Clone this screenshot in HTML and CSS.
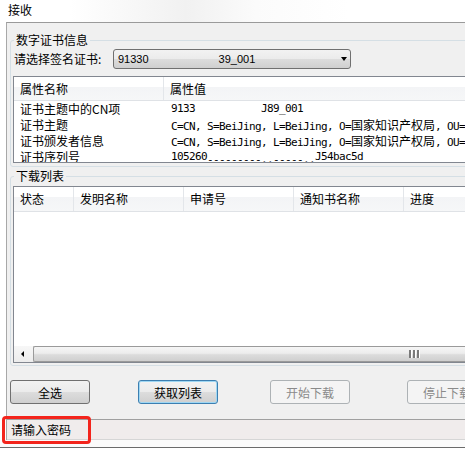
FILE: index.html
```html
<!DOCTYPE html>
<html lang="zh-CN">

<head>
    <meta charset="UTF-8">
    <meta name="viewport" content="width=device-width, initial-scale=1.0">
    <title>接收</title>
    <link rel="stylesheet" href="styles.css">
</head>

<body>
    <!-- 标题栏 -->
    <div class="titlebar">接收</div>

    <div class="window">
        <!-- 数字证书信息 -->
        <fieldset class="group group-cert">
            <legend>数字证书信息</legend>
            <div class="cert-row">
                <label class="cert-label">请选择签名证书:</label>
                <div class="combo">
                    <span class="combo-text">91330</span>
                    <span class="combo-text combo-tail">39_001</span>
                    <span class="combo-arrow"></span>
                </div>
            </div>

            <div class="listview props">
                <div class="lv-header">
                    <div class="hcol p-name">属性名称</div>
                    <div class="hcol p-value">属性值</div>
                </div>
                <div class="lv-row">
                    <div class="cell p-name">证书主题中的CN项</div>
                    <div class="cell p-value mono">9133           J89_001</div>
                </div>
                <div class="lv-row">
                    <div class="cell p-name">证书主题</div>
                    <div class="cell p-value mono">C=CN, S=BeiJing, L=BeiJing, O=<span class="cjk">国家知识产权局</span>, OU=<span class="cjk">国</span></div>
                </div>
                <div class="lv-row">
                    <div class="cell p-name">证书颁发者信息</div>
                    <div class="cell p-value mono">C=CN, S=BeiJing, L=BeiJing, O=<span class="cjk">国家知识产权局</span>, OU=<span class="cjk">国</span></div>
                </div>
                <div class="lv-row">
                    <div class="cell p-name">证书序列号</div>
                    <div class="cell p-value mono">105260<span class="masked">---------..-----..</span>J54bac5d</div>
                </div>
            </div>
        </fieldset>

        <!-- 下载列表 -->
        <fieldset class="group group-dl">
            <legend>下载列表</legend>
            <div class="listview downloads">
                <div class="lv-header">
                    <div class="hcol d-state">状态</div>
                    <div class="hcol d-name">发明名称</div>
                    <div class="hcol d-no">申请号</div>
                    <div class="hcol d-notice">通知书名称</div>
                    <div class="hcol d-progress">进度</div>
                </div>
                <div class="lv-body"></div>
                <div class="hscroll">
                    <div class="hs-arrow"><span class="hs-tri"></span></div>
                    <div class="hs-thumb">
                        <span class="grip"></span>
                        <span class="grip"></span>
                        <span class="grip"></span>
                    </div>
                </div>
            </div>
        </fieldset>

        <div class="buttons">
            <button class="btn btn-all">全选</button>
            <button class="btn btn-fetch focused">获取列表</button>
            <button class="btn btn-start" disabled>开始下载</button>
            <button class="btn btn-stop" disabled>停止下载</button>
        </div>

        <div class="statusbar">请输入密码</div>
    </div>
    <div class="frame-bottom"></div>

    <!-- 标注框 -->
    <div class="highlight"></div>
</body>

</html>
```

FILE: styles.css
```css
* {
    margin: 0;
    padding: 0;
    box-sizing: border-box;
}

body {
    position: relative;
    width: 465px;
    height: 454px;
    overflow: hidden;
    background-color: #fff;
    font-family: "Noto Sans CJK SC", "Microsoft YaHei", sans-serif;
    font-size: 12px;
    color: #000;
}

.titlebar {
    height: 22px;
    padding: 3px 0 0 8px;
    line-height: 14px;
    background: linear-gradient(90deg, #fff 15%, #f1f1f1 40%, #fbfbfb 55%, #fff 75%);
}

.window {
    width: 560px;
    margin-left: 6px;
    border-top: 1px solid #9a9a9a;
    border-left: 1px solid #a8a8a8;
    background-color: #f0f0f0;
}

/* 分组框 */
.group {
    margin-left: 3px;
    border: 1px solid #d5dfe5;
    border-radius: 3px;
    padding: 2px 0 0 2px;
}

.group legend {
    margin-left: 1px;
    padding: 0 2px;
    line-height: 14px;
    height: 14px;
}

.group-cert {
    margin-top: 10px;
    padding-bottom: 3px;
}

.group-dl {
    margin-top: 2px;
    padding-top: 3px;
    padding-bottom: 2px;
}

.cert-row {
    display: flex;
    align-items: center;
    height: 20px;
    padding-left: 1px;
}

.cert-label {
    width: 99px;
    line-height: 14px;
}

.combo {
    display: flex;
    align-items: center;
    width: 238px;
    height: 20px;
    padding-left: 4px;
    border: 1px solid #707070;
    border-radius: 3px;
    background: linear-gradient(#f2f2f2, #ebebeb 50%, #dddddd 50%, #cfcfcf);
}

.combo-text {
    font-family: "Liberation Sans", Arial, sans-serif;
    font-size: 11px;
    line-height: 14px;
}

.combo-tail {
    margin-left: 70px;
}

.combo-arrow {
    margin-left: auto;
    margin-right: 3px;
    width: 0;
    height: 0;
    border-left: 3.5px solid transparent;
    border-right: 3.5px solid transparent;
    border-top: 4px solid #000;
}

/* 列表视图 */
.listview {
    border: 1px solid #828790;
    background-color: #fff;
    overflow: hidden;
}

.props {
    margin-top: 7px;
    height: 87px;
}

.lv-header {
    display: flex;
    background: linear-gradient(#fff 0, #fff 42%, #f3f4f6 42%, #f6f7f8 100%);
    border-bottom: 1px solid #dfe2e6;
}

.props .lv-header {
    height: 24px;
}

.downloads .lv-header {
    height: 25px;
}

.hcol {
    display: flex;
    align-items: center;
    padding-left: 6px;
    border-right: 1px solid #e3e6ea;
    line-height: 14px;
}

.lv-row {
    display: flex;
    height: 16px;
    line-height: 16px;
    white-space: nowrap;
}

.cell {
    padding-left: 6px;
    overflow: hidden;
}

.p-name {
    width: 150px;
    flex-shrink: 0;
}

.p-value {
    flex: 1;
}

.lv-row .p-value {
    padding-left: 7px;
}

.mono {
    font-family: "DejaVu Sans Mono", "Liberation Mono", monospace;
    font-size: 11px;
    letter-spacing: -0.62px;
    white-space: pre;
}

.mono .cjk {
    font-family: "Noto Sans CJK SC", sans-serif;
    font-size: 12px;
    letter-spacing: 0;
}

.masked {
    vertical-align: -3px;
}

.d-state {
    width: 60px;
}

.d-name,
.d-no,
.d-notice {
    width: 110px;
}

.d-progress {
    width: 110px;
}

.lv-body {
    height: 134px;
}

/* 水平滚动条 */
.hscroll {
    display: flex;
    height: 16px;
    background-color: #e9e9e9;
}

.hs-arrow {
    display: flex;
    align-items: center;
    justify-content: center;
    width: 19px;
    background: linear-gradient(#f7f7f7, #ececec);
}

.hs-tri {
    width: 0;
    height: 0;
    border-top: 3px solid transparent;
    border-bottom: 3px solid transparent;
    border-right: 3px solid #000;
    margin-left: -3px;
}

.hs-thumb {
    display: flex;
    align-items: center;
    gap: 1px;
    flex: 1;
    padding-left: 375px;
    border: 1px solid #9a9a9a;
    border-right: none;
    border-radius: 2px 0 0 2px;
    background: linear-gradient(#f6f6f6, #ececec 45%, #dcdcdc 55%, #cfcfcf);
}

.grip {
    width: 2px;
    height: 8px;
    background-color: #7a7a7a;
    border-right: 1px solid #fff;
    box-sizing: content-box;
}

/* 按钮 */
.buttons {
    display: flex;
    margin: 14px 0 0 3px;
}

.btn {
    width: 80px;
    height: 24px;
    font-family: "Noto Sans CJK SC", sans-serif;
    font-size: 12px;
    color: #000;
    border: 1px solid #707070;
    border-radius: 3px;
    background: linear-gradient(#f2f2f2, #ebebeb 50%, #dddddd 50%, #cfcfcf);
}

.btn-fetch {
    margin-left: 48px;
}

.btn-start {
    margin-left: 52px;
}

.btn-stop {
    margin-left: 57px;
}

.focused {
    border-color: #3c7fb1;
    box-shadow: inset 0 0 0 1px #9fd7f3;
}

.btn:disabled {
    color: #8a8a8a;
    border-color: #adb2b5;
    background: #f4f4f4;
}

/* 状态栏 */
.statusbar {
    margin-top: 15px;
    height: 21px;
    padding-left: 4px;
    line-height: 19px;
    border-top: 1px solid #a0a0a0;
    border-bottom: 1px solid #d6d6d6;
    background-color: #f0ecec;
}

.frame-bottom {
    height: 8px;
    border-bottom: 1px solid #6b6b6b;
    background-color: #fbfbfb;
}

.highlight {
    position: absolute;
    left: 2px;
    top: 416px;
    width: 89px;
    height: 28px;
    border: 3px solid #f3241c;
    border-radius: 4px;
}
```
